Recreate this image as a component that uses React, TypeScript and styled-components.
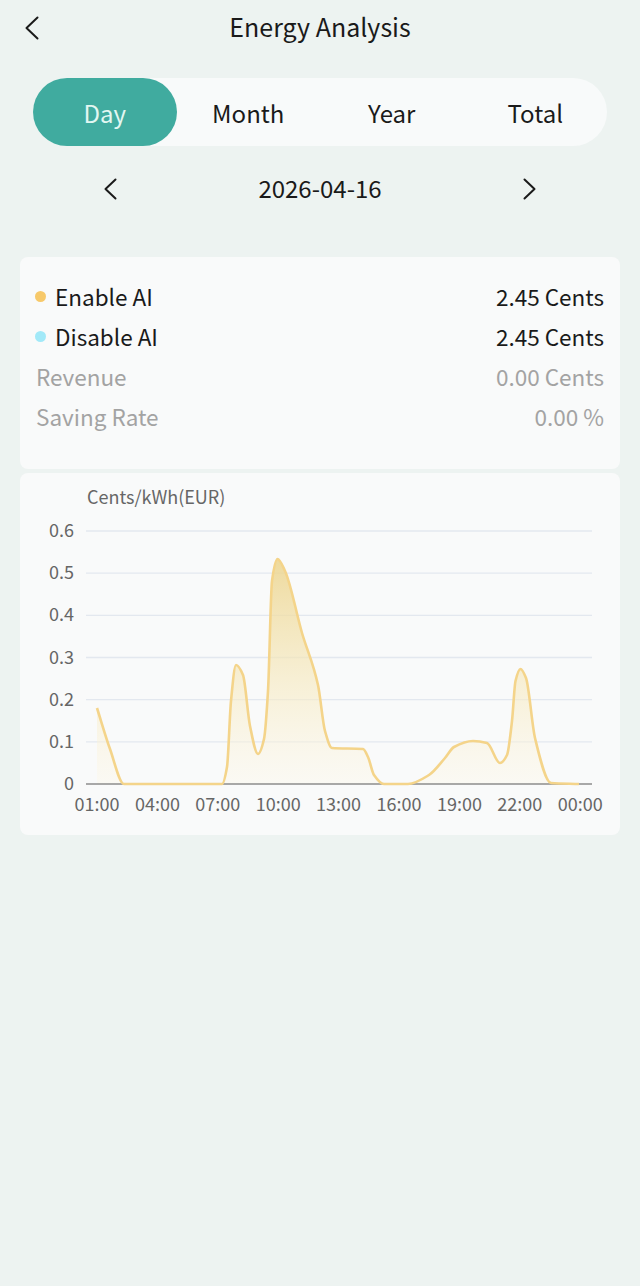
import React from "react";
import styled, { createGlobalStyle } from "styled-components";

const GlobalStyle = createGlobalStyle`
  html, body { margin: 0; padding: 0; background: #edf3f1; }
  body { font-family: "Noto Sans CJK SC", "Noto Sans", sans-serif; color: #1a1a1a; }
  * { box-sizing: border-box; }
`;

const Page = styled.div`
  width: 640px;
  min-height: 1286px;
  background: #edf3f1;
  display: flex;
  flex-direction: column;
`;

const Header = styled.div`
  height: 55px;
  display: grid;
  grid-template-columns: 64px 1fr 64px;
  align-items: center;
`;

const IconButton = styled.button`
  border: none;
  background: transparent;
  padding: 0;
  display: flex;
  align-items: center;
  justify-content: center;
  color: #1a1a1a;
  cursor: pointer;
`;

const Title = styled.div`
  text-align: center;
  font-size: 25px;
  line-height: 53px;
  padding-bottom: 2px;
  color: #1a1a1a;
`;

const Tabs = styled.div`
  margin: 23px 33px 0;
  height: 68px;
  border-radius: 34px;
  background: #f8fafa;
  display: grid;
  grid-template-columns: repeat(4, 1fr);
`;

const Tab = styled.div<{ $active?: boolean }>`
  border-radius: 34px;
  display: flex;
  align-items: center;
  justify-content: center;
  font-size: 24px;
  background: ${(p) => (p.$active ? "#40ab9f" : "transparent")};
  color: ${(p) => (p.$active ? "#e2f7f2" : "#1a1a1a")};
`;

const DateRow = styled.div`
  margin-top: 21px;
  height: 44px;
  display: flex;
  align-items: center;
  justify-content: space-between;
  padding: 0 104px;
`;

const DateText = styled.div`
  font-size: 24px;
  line-height: 44px;
  padding-bottom: 2px;
  color: #1a1a1a;
`;

const Card = styled.div<{ $top: number }>`
  margin: ${(p) => p.$top}px 20px 0;
  background: #f9fafa;
  border-radius: 8px;
`;

const Stats = styled.div`
  padding: 19px 16px 33px;
  display: flex;
  flex-direction: column;
`;

const StatRow = styled.div<{ $muted?: boolean }>`
  height: 40px;
  display: flex;
  align-items: center;
  justify-content: space-between;
  font-size: 22.5px;
  color: ${(p) => (p.$muted ? "#a3a3a3" : "#1a1a1a")};
`;

const Label = styled.div`
  display: flex;
  align-items: center;
  gap: 9px;
`;

const Dot = styled.span<{ $color: string }>`
  width: 11px;
  height: 11px;
  border-radius: 50%;
  background: ${(p) => p.$color};
  margin-left: -1px;
`;

const ChartSvg = styled.svg`
  display: block;
  font-family: "Noto Sans CJK SC", "Noto Sans", sans-serif;
`;

const Chevron = ({ dir, w, h }: { dir: "left" | "right"; w: number; h: number }) => (
  <svg width={w} height={h} viewBox={`0 0 ${w} ${h}`} fill="none">
    <path
      d={dir === "left" ? `M${w - 1.5} 1.5 L1.5 ${h / 2} L${w - 1.5} ${h - 1.5}` : `M1.5 1.5 L${w - 1.5} ${h / 2} L1.5 ${h - 1.5}`}
      stroke="#1a1a1a"
      strokeWidth={2}
      strokeLinecap="round"
      strokeLinejoin="round"
    />
  </svg>
);

// Points in page coords; converted to card coords below
const rawPts: [number, number][] = [
  [97, 707], [110, 748], [124, 783], [222, 783], [227, 766], [231, 700], [236, 664],
  [243, 674], [250, 725], [258, 753], [264, 738], [268, 690], [272, 580], [277.5, 558],
  [285, 570], [302, 632], [318, 684], [325, 730], [332, 747], [363, 748], [368, 756],
  [374, 774], [384, 783], [408, 783], [429, 774], [445, 757], [454, 746], [473, 740],
  [487, 742], [500, 762], [507, 754], [512, 720], [515.5, 680], [520.5, 668], [526, 677],
  [535, 737], [551, 782], [579, 783],
];

const pts = rawPts.map(([x, y]) => [x - 20, y - 472] as [number, number]);

function monotonePath(p: [number, number][]): string {
  const n = p.length;
  const dx: number[] = [];
  const m: number[] = [];
  for (let i = 0; i < n - 1; i++) {
    dx.push(p[i + 1][0] - p[i][0]);
    m.push((p[i + 1][1] - p[i][1]) / (p[i + 1][0] - p[i][0]));
  }
  const t: number[] = new Array(n).fill(0);
  t[0] = m[0];
  t[n - 1] = m[n - 2];
  for (let i = 1; i < n - 1; i++) {
    if (m[i - 1] * m[i] <= 0) t[i] = 0;
    else {
      const w1 = 2 * dx[i] + dx[i - 1];
      const w2 = dx[i] + 2 * dx[i - 1];
      t[i] = (w1 + w2) / (w1 / m[i - 1] + w2 / m[i]);
    }
  }
  let d = `M${p[0][0]},${p[0][1]}`;
  for (let i = 0; i < n - 1; i++) {
    const h = dx[i] / 3;
    d += ` C${p[i][0] + h},${p[i][1] + t[i] * h} ${p[i + 1][0] - h},${p[i + 1][1] - t[i + 1] * h} ${p[i + 1][0]},${p[i + 1][1]}`;
  }
  return d;
}

const linePath = monotonePath(pts);
const areaPath = `${linePath} L${pts[pts.length - 1][0]},311 L${pts[0][0]},311 Z`;

const yTicks = ["0.6", "0.5", "0.4", "0.3", "0.2", "0.1", "0"];
const xTicks = ["01:00", "04:00", "07:00", "10:00", "13:00", "16:00", "19:00", "22:00", "00:00"];

const Chart = () => {
  const top = 58;
  const bottom = 311;
  const step = (bottom - top) / 6;
  return (
    <ChartSvg width={600} height={362} viewBox="0 0 600 362">
      <defs>
        <linearGradient id="areaFill" x1="0" y1="86" x2="0" y2="311" gradientUnits="userSpaceOnUse">
          <stop offset="0" stopColor="#ecd48c" stopOpacity={0.85} />
          <stop offset="0.6" stopColor="#f7ebc4" stopOpacity={0.6} />
          <stop offset="1" stopColor="#fdf8ea" stopOpacity={0.4} />
        </linearGradient>
      </defs>
      <text x={67} y={31} fontSize={18} fill="#666">Cents/kWh(EUR)</text>
      {yTicks.map((t, i) => {
        const y = top + i * step;
        return (
          <g key={t}>
            {i < 6 && <line x1={66} x2={572} y1={y} y2={y} stroke="#e3e8ef" strokeWidth={1.3} />}
            <text x={54} y={y + 6} fontSize={18} fill="#666" textAnchor="end">{t}</text>
          </g>
        );
      })}
      <path d={areaPath} fill="url(#areaFill)" />
      <line x1={66} x2={572} y1={bottom} y2={bottom} stroke="#8c8c8c" strokeWidth={1.3} />
      <path d={linePath} fill="none" stroke="#f4d48a" strokeWidth={2.6} strokeLinejoin="round" />
      {xTicks.map((t, i) => (
        <text key={t} x={77 + i * 60.4} y={338} fontSize={18} fill="#666" textAnchor="middle">{t}</text>
      ))}
    </ChartSvg>
  );
};

export default function App() {
  return (
    <Page>
      <GlobalStyle />
      <Header>
        <IconButton aria-label="back">
          <Chevron dir="left" w={14} h={24} />
        </IconButton>
        <Title>Energy Analysis</Title>
        <div />
      </Header>
      <Tabs>
        <Tab $active>Day</Tab>
        <Tab>Month</Tab>
        <Tab>Year</Tab>
        <Tab>Total</Tab>
      </Tabs>
      <DateRow>
        <IconButton aria-label="previous">
          <Chevron dir="left" w={13} h={22} />
        </IconButton>
        <DateText>2026-04-16</DateText>
        <IconButton aria-label="next">
          <Chevron dir="right" w={13} h={22} />
        </IconButton>
      </DateRow>
      <Card $top={46}>
        <Stats>
          <StatRow>
            <Label><Dot $color="#f7c96a" />Enable AI</Label>
            <span>2.45 Cents</span>
          </StatRow>
          <StatRow>
            <Label><Dot $color="#a2e9f8" />Disable AI</Label>
            <span>2.45 Cents</span>
          </StatRow>
          <StatRow $muted>
            <span>Revenue</span>
            <span>0.00 Cents</span>
          </StatRow>
          <StatRow $muted>
            <span>Saving Rate</span>
            <span>0.00 %</span>
          </StatRow>
        </Stats>
      </Card>
      <Card $top={4}>
        <Chart />
      </Card>
    </Page>
  );
}
